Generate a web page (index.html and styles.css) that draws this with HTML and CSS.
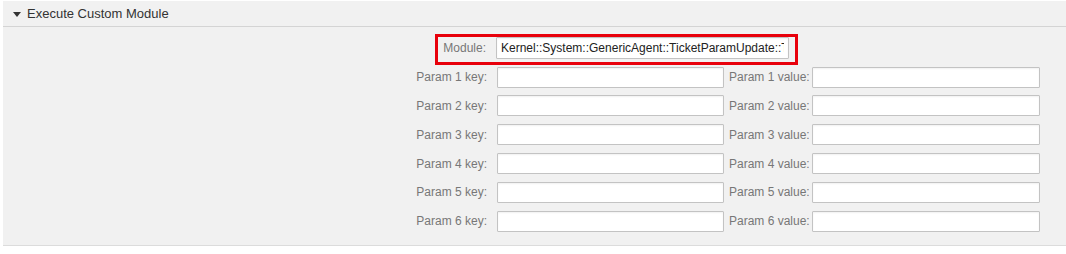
FILE: index.html
```html
<!DOCTYPE html>
<html lang="en">
<head>
    <meta charset="UTF-8">
    <title>Execute Custom Module</title>
    <link rel="stylesheet" href="styles.css">
</head>
<body>

    <div class="widget">
        <div class="widget-header">
            <span class="toggle"></span>
            <h2>Execute Custom Module</h2>
        </div>
        <div class="widget-content">
            <!-- Módulo a executar -->
            <div class="module-row">
                <label for="module">Module:</label>
                <input type="text" id="module" class="module-input" value="Kernel::System::GenericAgent::TicketParamUpdate::TicketParamUpdate">
            </div>

            <!-- Pares de parâmetros -->
            <div class="param-row">
                <label class="key-label">Param 1 key:</label>
                <input type="text" class="param-input">
                <label class="value-label">Param 1 value:</label>
                <input type="text" class="param-input value">
            </div>
            <div class="param-row">
                <label class="key-label">Param 2 key:</label>
                <input type="text" class="param-input">
                <label class="value-label">Param 2 value:</label>
                <input type="text" class="param-input value">
            </div>
            <div class="param-row">
                <label class="key-label">Param 3 key:</label>
                <input type="text" class="param-input">
                <label class="value-label">Param 3 value:</label>
                <input type="text" class="param-input value">
            </div>
            <div class="param-row">
                <label class="key-label">Param 4 key:</label>
                <input type="text" class="param-input">
                <label class="value-label">Param 4 value:</label>
                <input type="text" class="param-input value">
            </div>
            <div class="param-row">
                <label class="key-label">Param 5 key:</label>
                <input type="text" class="param-input">
                <label class="value-label">Param 5 value:</label>
                <input type="text" class="param-input value">
            </div>
            <div class="param-row">
                <label class="key-label">Param 6 key:</label>
                <input type="text" class="param-input">
                <label class="value-label">Param 6 value:</label>
                <input type="text" class="param-input value">
            </div>
        </div>
    </div>

</body>
</html>
```

FILE: styles.css
```css
body {
    margin: 0;
    background-color: #fff;
    font-family: "Liberation Sans", Arial, sans-serif;
}
.widget {
    margin: 1px 0 0 3px;
    background-color: #f1f1f1;
    border-bottom: 1px solid #dcdcdc;
}
.widget-header {
    height: 25px;
    display: flex;
    align-items: center;
    padding-left: 10px;
    border-bottom: 1px solid #d4d4d4;
}
.toggle {
    width: 0;
    height: 0;
    border-left: 4px solid transparent;
    border-right: 4px solid transparent;
    border-top: 5px solid #333;
    margin-right: 6px;
    margin-top: 1px;
}
.widget-header h2 {
    margin: 0;
    font-size: 13px;
    font-weight: normal;
    color: #333;
}
.widget-content {
    padding: 7px 0 13px 0;
}
input {
    font-family: "Liberation Sans", Arial, sans-serif;
    font-size: 12px;
    color: #222;
    background-color: #fff;
    border: 1px solid #c3c3c3;
    border-radius: 1px;
    box-shadow: inset 0 1px 2px rgba(0,0,0,0.06);
    box-sizing: border-box;
    padding: 0 4px;
    outline: none;
}
label {
    font-size: 12px;
    color: #777;
}
.module-row {
    display: flex;
    align-items: center;
    width: 363px;
    height: 31px;
    box-sizing: border-box;
    margin-left: 432px;
    border: 3px solid #e8000b;
    padding: 0 5px 3px 0;
}
.module-row label {
    width: 48px;
    text-align: right;
}
.module-input {
    width: 293px;
    height: 22px;
    margin-left: 10px;
}
.param-row {
    display: flex;
    align-items: center;
    margin-top: 7.8px;
}
.module-row + .param-row {
    margin-top: 1.7px;
}
.key-label {
    width: 120px;
    margin-left: 364px;
    text-align: right;
}
.param-input {
    width: 227px;
    height: 21px;
    margin-left: 10px;
}
.value-label {
    width: 79px;
    margin-left: 5px;
    white-space: nowrap;
}
.param-input.value {
    width: 228px;
    margin-left: 4px;
}
```
